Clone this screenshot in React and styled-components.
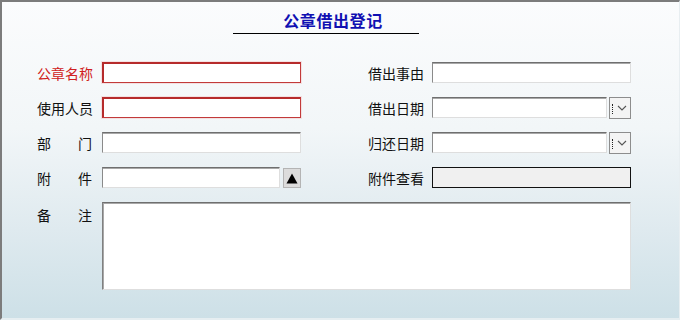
import React from "react";
import styled, { createGlobalStyle } from "styled-components";

const Global = createGlobalStyle`
  html, body { margin: 0; padding: 0; }
  body { font-family: "Noto Sans CJK SC", "Noto Sans", sans-serif; }
  * { box-sizing: border-box; }
`;

const Window = styled.div`
  width: 680px;
  height: 320px;
  border-top: 2px solid #7c7c7c;
  border-left: 2px solid #7c7c7c;
  border-right: 1px solid #e8eef1;
  border-bottom: 2px solid #e6eef1;
  background: linear-gradient(to bottom, #fbfcfd 0%, #f2f6f8 40%, #dfeaef 72%, #cde0e7 100%);
  display: flex;
  flex-direction: column;
`;

const TitleBar = styled.div`
  margin-left: 231px;
  width: 186px;
  height: 32px;
  border-bottom: 1px solid #000;
  display: flex;
  align-items: flex-end;
  justify-content: center;
  padding-left: 14px;
  padding-bottom: 4px;
`;

const TitleText = styled.span`
  font-size: 16px;
  font-weight: bold;
  color: #1010b2;
  line-height: 18px;
  letter-spacing: 0.6px;
`;

const Form = styled.div`
  margin-top: 28px;
  margin-left: 35px;
  display: grid;
  grid-template-columns: 65px 199px 67px 64px 199px;
  grid-template-rows: repeat(4, 21px) 88px;
  row-gap: 14px;
`;

const Label = styled.div`
  width: 55px;
  font-size: 14px;
  line-height: 16px;
  color: ${(p) => (p.$required ? "#d02020" : "#111")};
  display: flex;
  justify-content: ${(p) => (p.$spread ? "space-between" : "flex-start")};
  align-self: ${(p) => (p.$top ? "start" : "center")};
  margin-top: ${(p) => (p.$top ? "5px" : "0")};
  white-space: nowrap;
`;

const Field = styled.div`
  height: 21px;
  background: ${(p) => (p.$readonly ? "#f0f0f0" : "#fff")};
  border: 1px solid;
  border-color: ${(p) =>
    p.$required
      ? "#b62b2b #c23a3a #c23a3a #b62b2b"
      : p.$readonly
      ? "#111"
      : "#6f6f6f #dedede #dedede #8a8a8a"};
  box-shadow: ${(p) =>
    p.$required
      ? "inset 1px 1px 0 #b62b2b, 0 0 0 1px rgba(240,180,180,0.35)"
      : p.$readonly
      ? "none"
      : "inset 0 1px 0 #a8a8a8"};
  flex: 1;
`;

const Memo = styled.div`
  grid-column: 2 / 6;
  background: #fff;
  border: 1px solid;
  border-color: #6f6f6f #dedede #dedede #808080;
  box-shadow: inset 1px 1px 0 #a8a8a8;
`;

const FieldWithButton = styled.div`
  display: flex;
  align-items: stretch;
  gap: ${(p) => p.$gap}px;
`;

const UploadButton = styled.div`
  width: 18px;
  height: 20px;
  margin-top: 1px;
  background: #dcdcdc;
  border: 1px solid #b4b4b4;
  display: flex;
  align-items: center;
  justify-content: center;
`;

const DropButton = styled.div`
  width: 22px;
  height: 22px;
  background: #f4f4f4;
  border: 1px solid #8d8d8d;
  display: flex;
  align-items: center;
  justify-content: center;
  padding-left: 4px;
  position: relative;
`;

const FocusDots = styled.span`
  position: absolute;
  left: 2px;
  top: 6px;
  height: 10px;
  border-left: 1px dotted #222;
`;

const Spacer = styled.div``;

function DateField() {
  return (
    <FieldWithButton $gap={2}>
      <Field />
      <DropButton>
        <FocusDots />
        <svg width="10" height="6" viewBox="0 0 10 6">
          <path d="M1 1 L5 5 L9 1" fill="none" stroke="#555" strokeWidth="1.1" />
        </svg>
      </DropButton>
    </FieldWithButton>
  );
}

export default function App() {
  return (
    <>
      <Global />
      <Window>
        <TitleBar>
          <TitleText>公章借出登记</TitleText>
        </TitleBar>
        <Form>
          <Label $required>公章名称</Label>
          <Field $required />
          <Spacer />
          <Label>借出事由</Label>
          <Field />

          <Label>使用人员</Label>
          <Field $required />
          <Spacer />
          <Label>借出日期</Label>
          <DateField />

          <Label $spread>
            <span>部</span>
            <span>门</span>
          </Label>
          <Field />
          <Spacer />
          <Label>归还日期</Label>
          <DateField />

          <Label $spread>
            <span>附</span>
            <span>件</span>
          </Label>
          <FieldWithButton $gap={3}>
            <Field />
            <UploadButton>
              <svg width="12" height="11" viewBox="0 0 12 11">
                <path d="M6 0.5 L11.5 10.5 L0.5 10.5 Z" fill="#000" />
              </svg>
            </UploadButton>
          </FieldWithButton>
          <Spacer />
          <Label>附件查看</Label>
          <Field $readonly />

          <Label $spread $top>
            <span>备</span>
            <span>注</span>
          </Label>
          <Memo />
        </Form>
      </Window>
    </>
  );
}
